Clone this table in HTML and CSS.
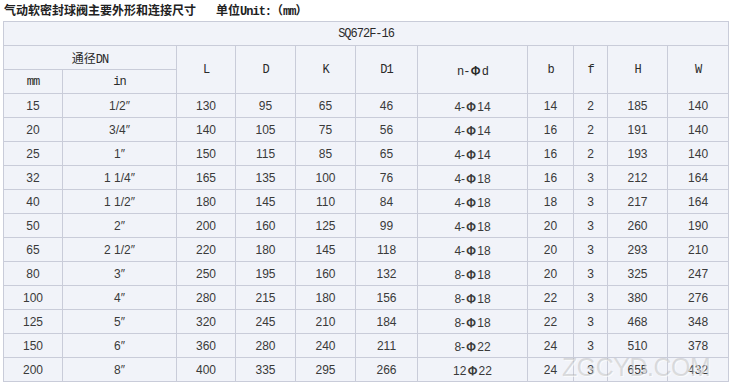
FILE: index.html
```html
<!DOCTYPE html>
<html lang="zh">
<head>
<meta charset="utf-8">
<title>气动软密封球阀主要外形和连接尺寸</title>
<link rel="stylesheet" href="styles.css">
</head>
<body>
<div class="page">
  <h1 class="title">气动软密封球阀主要外形和连接尺寸<span class="unit">单位<span class="lat">Unit:</span>（<span class="lat">mm</span>）</span></h1>
  <table class="spec">
    <colgroup>
      <col class="c-mm"><col class="c-in"><col class="c-l"><col class="c-d"><col class="c-k"><col class="c-d1"><col class="c-nd"><col class="c-b"><col class="c-f"><col class="c-h"><col class="c-w">
    </colgroup>
    <thead>
      <tr><th colspan="11">SQ672F-16</th></tr>
      <tr><th colspan="2"><span class="cjk">通径</span>DN</th><th rowspan="2">L</th><th rowspan="2">D</th><th rowspan="2">K</th><th rowspan="2">D1</th><th rowspan="2">n-<span class="phi">Φ</span>d</th><th rowspan="2">b</th><th rowspan="2">f</th><th rowspan="2">H</th><th rowspan="2">W</th></tr>
      <tr><th>mm</th><th>in</th></tr>
    </thead>
    <tbody>
      <tr><td>15</td><td>1/2″</td><td>130</td><td>95</td><td>65</td><td>46</td><td>4-<span class="phi">Φ</span>14</td><td>14</td><td>2</td><td>185</td><td>140</td></tr>
      <tr><td>20</td><td>3/4″</td><td>140</td><td>105</td><td>75</td><td>56</td><td>4-<span class="phi">Φ</span>14</td><td>16</td><td>2</td><td>191</td><td>140</td></tr>
      <tr><td>25</td><td>1″</td><td>150</td><td>115</td><td>85</td><td>65</td><td>4-<span class="phi">Φ</span>14</td><td>16</td><td>2</td><td>193</td><td>140</td></tr>
      <tr><td>32</td><td>1 1/4″</td><td>165</td><td>135</td><td>100</td><td>76</td><td>4-<span class="phi">Φ</span>18</td><td>16</td><td>3</td><td>212</td><td>164</td></tr>
      <tr><td>40</td><td>1 1/2″</td><td>180</td><td>145</td><td>110</td><td>84</td><td>4-<span class="phi">Φ</span>18</td><td>18</td><td>3</td><td>217</td><td>164</td></tr>
      <tr><td>50</td><td>2″</td><td>200</td><td>160</td><td>125</td><td>99</td><td>4-<span class="phi">Φ</span>18</td><td>20</td><td>3</td><td>260</td><td>190</td></tr>
      <tr><td>65</td><td>2 1/2″</td><td>220</td><td>180</td><td>145</td><td>118</td><td>4-<span class="phi">Φ</span>18</td><td>20</td><td>3</td><td>293</td><td>210</td></tr>
      <tr><td>80</td><td>3″</td><td>250</td><td>195</td><td>160</td><td>132</td><td>8-<span class="phi">Φ</span>18</td><td>20</td><td>3</td><td>325</td><td>247</td></tr>
      <tr><td>100</td><td>4″</td><td>280</td><td>215</td><td>180</td><td>156</td><td>8-<span class="phi">Φ</span>18</td><td>22</td><td>3</td><td>380</td><td>276</td></tr>
      <tr><td>125</td><td>5″</td><td>320</td><td>245</td><td>210</td><td>184</td><td>8-<span class="phi">Φ</span>18</td><td>22</td><td>3</td><td>468</td><td>348</td></tr>
      <tr><td>150</td><td>6″</td><td>360</td><td>280</td><td>240</td><td>211</td><td>8-<span class="phi">Φ</span>22</td><td>24</td><td>3</td><td>510</td><td>378</td></tr>
      <tr><td>200</td><td>8″</td><td>400</td><td>335</td><td>295</td><td>266</td><td>12<span class="phi">Φ</span>22</td><td>24</td><td>3</td><td>655</td><td>432</td></tr>
    </tbody>
  </table>
  <div class="watermark">ZGCYD.COM</div>
</div>
</body>
</html>
```

FILE: styles.css
```css
html, body {
  margin: 0;
  padding: 0;
  background: #ffffff;
}

.page {
  position: relative;
  width: 731px;
  height: 384px;
  overflow: hidden;
}

.title {
  margin: 0 0 2px 0;
  padding: 0 0 0 4px;
  height: 19px;
  line-height: 19px;
  font-family: "Noto Sans CJK SC", sans-serif;
  font-size: 12px;
  font-weight: bold;
  color: #222222;
  white-space: nowrap;
}

.unit {
  margin-left: 20px;
}

.unit .lat {
  font-family: "Liberation Mono", monospace;
  font-size: 12px;
  letter-spacing: -1px;
}

.spec {
  margin-left: 3px;
  width: 726px;
  table-layout: fixed;
  border-collapse: separate;
  border-spacing: 1px;
  background: #c9ccd9;
  color: #333333;
}

.c-mm { width: 58px; }
.c-in { width: 113px; }
.c-l { width: 58px; }
.c-d { width: 59px; }
.c-k { width: 59px; }
.c-d1 { width: 61px; }
.c-nd { width: 109px; }
.c-b { width: 45px; }
.c-f { width: 33px; }
.c-h { width: 59px; }
.c-w { width: 60px; }

.spec th,
.spec td {
  height: 23px;
  padding: 0;
  background: #f1f3f9;
  text-align: center;
  vertical-align: middle;
  white-space: nowrap;
}

.spec th {
  font-family: "Liberation Mono", monospace;
  font-size: 12px;
  font-weight: normal;
  letter-spacing: -1px;
  color: #2a2a2a;
}

.spec th .cjk {
  font-family: "Noto Sans CJK SC", sans-serif;
  font-size: 12px;
  letter-spacing: 0;
}

.spec td {
  font-family: "Liberation Sans", Arial, sans-serif;
  font-size: 12px;
  color: #3a3a3a;
}

.phi {
  font-family: "Noto Sans CJK SC", sans-serif;
  font-weight: bold;
  font-size: 12px;
  letter-spacing: 0;
  padding: 0 1px;
}

.watermark {
  position: absolute;
  left: 562px;
  top: 355px;
  font-family: "Liberation Sans", Arial, sans-serif;
  font-size: 25px;
  line-height: 25px;
  letter-spacing: -0.5px;
  color: rgba(170, 170, 170, 0.38);
  text-shadow: 1px 1px 0 rgba(255, 255, 255, 0.6);
  pointer-events: none;
}
```
